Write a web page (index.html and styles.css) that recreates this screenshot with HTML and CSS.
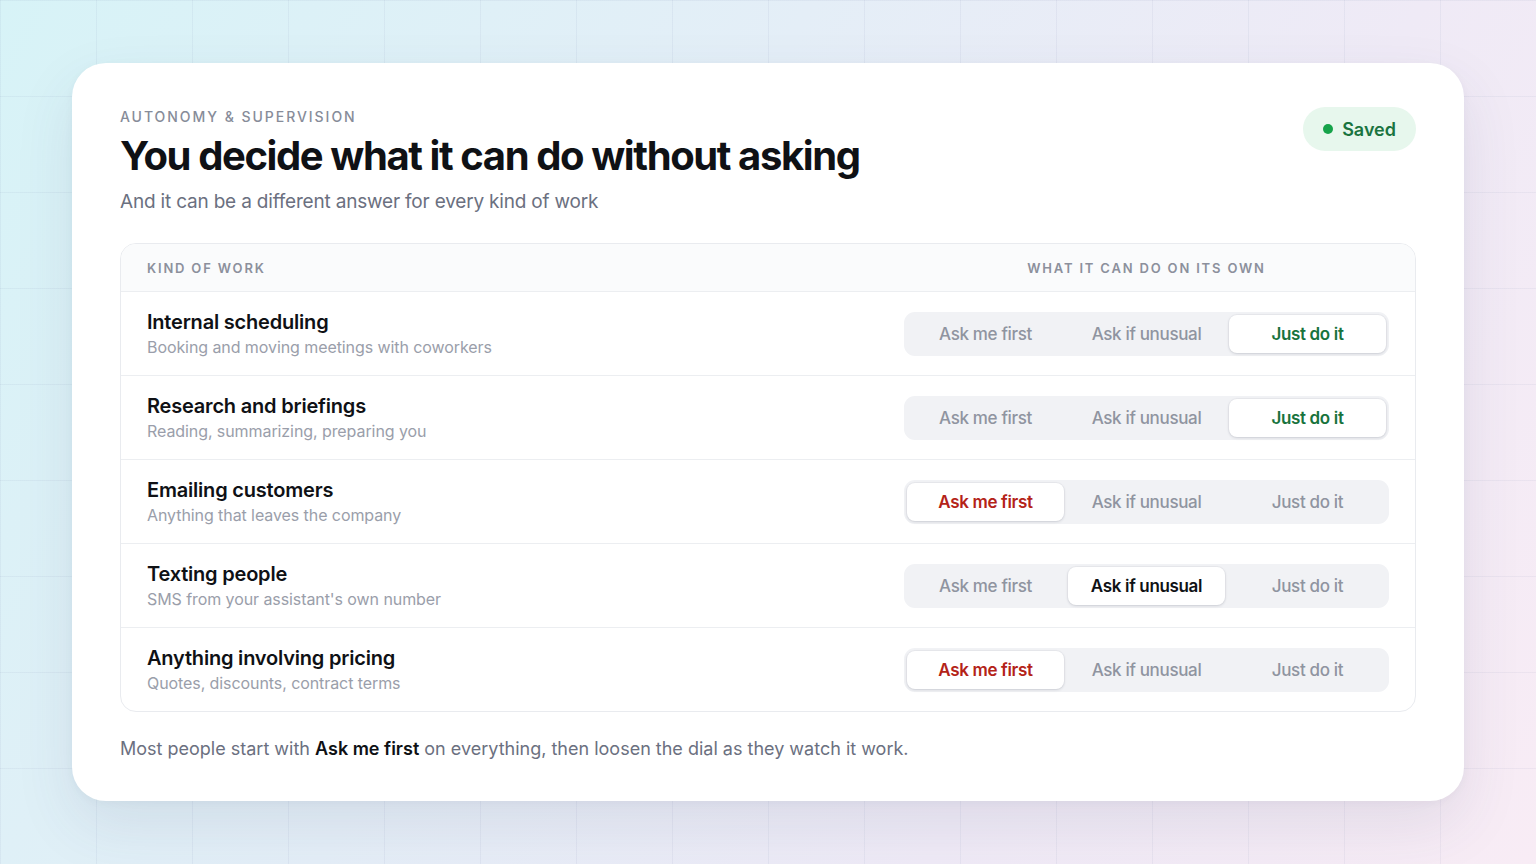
FILE: index.html
```html
<!DOCTYPE html>
<html lang="en">
<head>
  <meta charset="UTF-8">
  <title>Autonomy &amp; Supervision</title>
  <meta name="viewport" content="width=device-width, initial-scale=1.0">
  <link rel="stylesheet" href="styles.css">
</head>
<body>
  <div class="card">
    <div class="head">
      <div>
        <div class="eyebrow">Autonomy &amp; Supervision</div>
        <h1>You decide what it can do without asking</h1>
        <p class="sub">And it can be a different answer for every kind of work</p>
      </div>
      <div class="saved"><span class="dot"></span>Saved</div>
    </div>

    <div class="table">
      <div class="row header">
        <div class="label">Kind of work</div>
        <div class="label center">What it can do on its own</div>
      </div>

      <div class="row">
        <div>
          <div class="title">Internal scheduling</div>
          <div class="desc">Booking and moving meetings with coworkers</div>
        </div>
        <div class="seg">
          <span>Ask me first</span>
          <span>Ask if unusual</span>
          <span class="on go">Just do it</span>
        </div>
      </div>

      <div class="row">
        <div>
          <div class="title">Research and briefings</div>
          <div class="desc">Reading, summarizing, preparing you</div>
        </div>
        <div class="seg">
          <span>Ask me first</span>
          <span>Ask if unusual</span>
          <span class="on go">Just do it</span>
        </div>
      </div>

      <div class="row">
        <div>
          <div class="title">Emailing customers</div>
          <div class="desc">Anything that leaves the company</div>
        </div>
        <div class="seg">
          <span class="on stop">Ask me first</span>
          <span>Ask if unusual</span>
          <span>Just do it</span>
        </div>
      </div>

      <div class="row">
        <div>
          <div class="title">Texting people</div>
          <div class="desc">SMS from your assistant's own number</div>
        </div>
        <div class="seg">
          <span>Ask me first</span>
          <span class="on">Ask if unusual</span>
          <span>Just do it</span>
        </div>
      </div>

      <div class="row">
        <div>
          <div class="title">Anything involving pricing</div>
          <div class="desc">Quotes, discounts, contract terms</div>
        </div>
        <div class="seg">
          <span class="on stop">Ask me first</span>
          <span>Ask if unusual</span>
          <span>Just do it</span>
        </div>
      </div>
    </div>

    <p class="note">Most people start with <strong>Ask me first</strong> on everything, then loosen the dial as they watch it work.</p>
  </div>
</body>
</html>
```

FILE: styles.css
```css
html, body {
  height: 100%;
}
body {
  margin: 0;
  font-family: Inter, "Noto Sans", Arial, sans-serif;
  color: #0f1115;
  display: flex;
  align-items: center;
  justify-content: center;
  background:
    linear-gradient(to right, rgba(110, 125, 160, 0.08) 1px, transparent 1px) 0 0 / 96px 96px,
    linear-gradient(to bottom, rgba(110, 125, 160, 0.08) 1px, transparent 1px) 0 0 / 96px 96px,
    linear-gradient(120deg, #d7f3f7 0%, #e4eef7 40%, #efeaf6 70%, #f8ecf5 100%);
}
.card {
  width: 1392px;
  box-sizing: border-box;
  background: #fff;
  border-radius: 34px;
  padding: 45px 48px 39px;
  box-shadow: 0 24px 60px rgba(60, 70, 110, 0.10), 0 2px 8px rgba(40, 50, 80, 0.04);
}
.head {
  display: flex;
  justify-content: space-between;
  align-items: flex-start;
}
.eyebrow {
  font-size: 14px;
  line-height: 18px;
  font-weight: 500;
  letter-spacing: 0.14em;
  text-transform: uppercase;
  color: #878c99;
}
h1 {
  margin: 5px 0 0;
  font-size: 40px;
  line-height: 50px;
  font-weight: 700;
  letter-spacing: -0.035em;
  color: #0f1115;
}
.sub {
  margin: 8px 0 0;
  font-size: 19px;
  line-height: 26px;
  letter-spacing: -0.01em;
  color: #6b7080;
}
.saved {
  display: flex;
  align-items: center;
  gap: 9px;
  height: 44px;
  margin-top: -1px;
  padding: 0 20px;
  border-radius: 22px;
  background: #e7f7ed;
  color: #1a7440;
  font-size: 18px;
  font-weight: 600;
}
.dot {
  width: 10px;
  height: 10px;
  border-radius: 50%;
  background: #16a34a;
}
.table {
  margin-top: 28px;
  border: 1px solid #e9ebef;
  border-radius: 16px;
  overflow: hidden;
}
.row {
  display: grid;
  grid-template-columns: 1fr 485px;
  align-items: center;
  height: 83px;
  padding: 0 26px;
  border-top: 1px solid #eceef1;
}
.row.header {
  height: 47px;
  border-top: 0;
  background: #fafbfc;
}
.label {
  font-size: 13px;
  font-weight: 600;
  letter-spacing: 0.14em;
  text-transform: uppercase;
  color: #8c909c;
}
.center {
  text-align: center;
}
.title {
  font-size: 20px;
  line-height: 24px;
  font-weight: 600;
  letter-spacing: -0.01em;
  color: #0f1115;
}
.desc {
  margin-top: 2px;
  font-size: 16px;
  line-height: 22px;
  letter-spacing: -0.005em;
  color: #9a9eaa;
}
.seg {
  display: grid;
  grid-template-columns: repeat(3, 1fr);
  gap: 4px;
  padding: 3px;
  height: 44px;
  box-sizing: border-box;
  border-radius: 11px;
  background: #f1f2f5;
}
.seg span {
  display: flex;
  align-items: center;
  justify-content: center;
  border-radius: 8px;
  font-size: 17px;
  font-weight: 500;
  letter-spacing: -0.02em;
  color: #8f94a0;
}
.seg .on {
  background: #fff;
  color: #0f1115;
  font-weight: 600;
  box-shadow: 0 1px 3px rgba(20, 30, 50, 0.14), 0 0 0 1px rgba(20, 30, 50, 0.03);
}
.seg .go {
  color: #18733d;
}
.seg .stop {
  color: #b42318;
}
.note {
  margin: 24px 0 0;
  font-size: 18px;
  line-height: 26px;
  color: #6b7080;
}
.note strong {
  color: #0f1115;
  font-weight: 600;
}
```
